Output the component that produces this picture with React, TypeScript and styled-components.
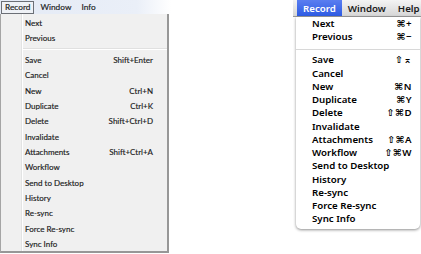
import React from "react";
import styled, { createGlobalStyle } from "styled-components";

const GlobalStyle = createGlobalStyle`
  html, body {
    margin: 0;
    padding: 0;
    background: #ffffff;
  }
`;

type Item = { label: string; keys?: string } | "sep";

const winItems: Item[] = [
  { label: "Next" },
  { label: "Previous" },
  "sep",
  { label: "Save", keys: "Shift+Enter" },
  { label: "Cancel" },
  { label: "New", keys: "Ctrl+N" },
  { label: "Duplicate", keys: "Ctrl+K" },
  { label: "Delete", keys: "Shift+Ctrl+D" },
  { label: "Invalidate" },
  { label: "Attachments", keys: "Shift+Ctrl+A" },
  { label: "Workflow" },
  { label: "Send to Desktop" },
  { label: "History" },
  { label: "Re-sync" },
  { label: "Force Re-sync" },
  { label: "Sync Info" },
];

const macItems: Item[] = [
  { label: "Next", keys: "⌘+" },
  { label: "Previous", keys: "⌘−" },
  "sep",
  { label: "Save", keys: "⇧⌅" },
  { label: "Cancel" },
  { label: "New", keys: "⌘N" },
  { label: "Duplicate", keys: "⌘Y" },
  { label: "Delete", keys: "⇧⌘D" },
  { label: "Invalidate" },
  { label: "Attachments", keys: "⇧⌘A" },
  { label: "Workflow", keys: "⇧⌘W" },
  { label: "Send to Desktop" },
  { label: "History" },
  { label: "Re-sync" },
  { label: "Force Re-sync" },
  { label: "Sync Info" },
];

export default function App() {
  return (
    <>
      <GlobalStyle />
      <Page>
        <WinMenu>
          <WinBar>
            <WinBarItem $open>Record</WinBarItem>
            <WinBarItem>Window</WinBarItem>
            <WinBarItem>Info</WinBarItem>
          </WinBar>
          <WinPanel>
            {winItems.map((item, i) =>
              item === "sep" ? (
                <WinSep key={i} />
              ) : (
                <WinRow key={i}>
                  <span>{item.label}</span>
                  {item.keys && <span>{item.keys}</span>}
                </WinRow>
              )
            )}
          </WinPanel>
        </WinMenu>

        <MacMenu>
          <MacBar>
            <MacBarItem $open>Record</MacBarItem>
            <MacBarItem>Window</MacBarItem>
            <MacBarItem>Help</MacBarItem>
          </MacBar>
          <MacPanel>
            {macItems.map((item, i) =>
              item === "sep" ? (
                <MacSep key={i} />
              ) : (
                <MacRow key={i}>
                  <span>{item.label}</span>
                  {item.keys && <MacKeys>{item.keys}</MacKeys>}
                </MacRow>
              )
            )}
          </MacPanel>
        </MacMenu>
      </Page>
    </>
  );
}

const Page = styled.div`
  width: 421px;
  height: 254px;
  display: flex;
  justify-content: space-between;
  align-items: flex-start;
  overflow: hidden;
`;

/* ---------- windows ---------- */

const WinMenu = styled.div`
  width: 171px;
  display: flex;
  flex-direction: column;
  font-family: Lato, "Open Sans", sans-serif;
  font-size: 8px;
  color: #1a1a1a;
  -webkit-text-stroke: 0.15px #1a1a1a;
`;

const WinBar = styled.div`
  height: 14px;
  display: flex;
  align-items: center;
  padding-left: 1px;
  background: linear-gradient(to right, #e4eaf5 0%, #eaeff8 80%, #ffffff 100%);
`;

const WinBarItem = styled.div<{ $open?: boolean }>`
  height: 13px;
  box-sizing: border-box;
  display: flex;
  align-items: center;
  padding: 0 3px;
  margin-right: 2px;
  border: 1px solid ${(p) => (p.$open ? "#6b6f76" : "transparent")};
  background: ${(p) => (p.$open ? "#eef1f6" : "transparent")};
  font-size: 8.3px;
`;

const WinPanel = styled.div`
  width: 169px;
  box-sizing: border-box;
  padding: 1px 0 0;
  height: 239px;
  border-left: 1px solid #a5a5a5;
  border-right: 2px solid #979797;
  border-bottom: 2px solid #979797;
  background: linear-gradient(
    to right,
    #f0f0f0 0,
    #f0f0f0 20px,
    #e2e3e3 20px,
    #e2e3e3 21px,
    #ffffff 21px,
    #ffffff 22px,
    #f0f0f0 22px
  );
`;

const WinRow = styled.div`
  height: 15.33px;
  display: flex;
  align-items: center;
  justify-content: space-between;
  padding: 0 14px 0 24px;
`;

const WinSep = styled.div`
  height: 6.7px;
  margin-left: 22px;
  background: linear-gradient(
    to bottom,
    transparent 0,
    transparent 2px,
    #e0e0e0 2px,
    #e0e0e0 3px,
    #ffffff 3px,
    #ffffff 4px,
    transparent 4px
  );
`;

/* ---------- mac ---------- */

const MacMenu = styled.div`
  width: 128px;
  display: flex;
  flex-direction: column;
  font-family: "Noto Sans", "DejaVu Sans", sans-serif;
  font-size: 10px;
  color: #000;
`;

const MacBar = styled.div`
  height: 17px;
  display: flex;
  align-items: stretch;
  padding-left: 4px;
  background: linear-gradient(to bottom, #f4f4f4, #d6d6d6);
  border-bottom: 1px solid #9a9a9a;
  box-sizing: border-box;
`;

const MacBarItem = styled.div<{ $open?: boolean }>`
  display: flex;
  align-items: center;
  padding: 0 6px;
  font-size: 9.7px;
  font-weight: 600;
  color: ${(p) => (p.$open ? "#ffffff" : "#1a1a1a")};
  background: ${(p) =>
    p.$open ? "linear-gradient(to bottom, #5a7ef0, #2d5be3)" : "transparent"};
`;

const MacPanel = styled.div`
  margin-left: 3px;
  margin-right: 1px;
  padding: 0 0 3px;
  background: #ffffff;
  border-radius: 0 0 5px 5px;
  box-shadow: 0 1px 3px rgba(0, 0, 0, 0.45);
`;

const MacRow = styled.div`
  height: 13.25px;
  display: flex;
  align-items: center;
  justify-content: space-between;
  padding: 0 8px 0 16px;
  font-weight: 600;
  font-size: 9.7px;
`;

const MacKeys = styled.span`
  font-size: 9.7px;
  letter-spacing: 0.5px;
`;

const MacSep = styled.div`
  height: 9.75px;
  background: linear-gradient(
    to bottom,
    transparent 0,
    transparent 5px,
    #d8d8d8 5px,
    #d8d8d8 6px,
    transparent 6px
  );
`;
